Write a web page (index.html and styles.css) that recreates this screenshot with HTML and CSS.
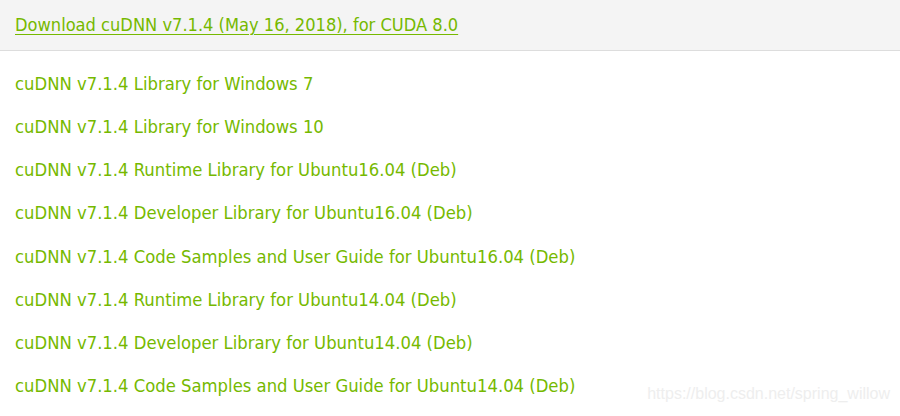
FILE: index.html
```html
<!DOCTYPE html>
<html lang="en">
<head>
<meta charset="utf-8">
<title>cuDNN Download</title>
<link rel="stylesheet" href="styles.css">
</head>
<body>
<div class="panel">
  <div class="panel-heading">
    <a class="heading-link" href="#">Download cuDNN v7.1.4 (May 16, 2018), for CUDA 8.0</a>
  </div>
  <ul class="file-list">
    <li><a href="#">cuDNN v7.1.4 Library for Windows 7</a></li>
    <li><a href="#">cuDNN v7.1.4 Library for Windows 10</a></li>
    <li><a href="#">cuDNN v7.1.4 Runtime Library for Ubuntu16.04 (Deb)</a></li>
    <li><a href="#">cuDNN v7.1.4 Developer Library for Ubuntu16.04 (Deb)</a></li>
    <li><a href="#">cuDNN v7.1.4 Code Samples and User Guide for Ubuntu16.04 (Deb)</a></li>
    <li><a href="#">cuDNN v7.1.4 Runtime Library for Ubuntu14.04 (Deb)</a></li>
    <li><a href="#">cuDNN v7.1.4 Developer Library for Ubuntu14.04 (Deb)</a></li>
    <li><a href="#">cuDNN v7.1.4 Code Samples and User Guide for Ubuntu14.04 (Deb)</a></li>
  </ul>
  <div class="watermark">https://blog.csdn.net/spring_willow</div>
</div>
</body>
</html>
```
FILE: styles.css
```css
html, body {
  margin: 0;
  padding: 0;
  background: #ffffff;
}
.panel {
  position: relative;
  width: 900px;
  height: 416px;
  overflow: hidden;
  font-family: "DejaVu Sans Condensed", "DejaVu Sans", sans-serif;
  font-size: 18.3px;
}
.panel-heading {
  height: 51px;
  box-sizing: border-box;
  background: #f4f4f4;
  border-bottom: 1px solid #dddddd;
  display: flex;
  align-items: center;
  padding: 0 15px 2px;
}
.heading-link {
  font-size: 18.1px;
  color: #76b900;
  text-decoration: underline;
  text-underline-offset: 3px;
  text-decoration-thickness: 1px;
}
.file-list {
  list-style: none;
  margin: 0;
  padding: 11px 15px 0;
}
.file-list li {
  height: 43.14px;
  display: flex;
  align-items: center;
}
.file-list a {
  color: #76b900;
  text-decoration: none;
}
.watermark {
  position: absolute;
  right: 10px;
  bottom: 13px;
  font-family: "Liberation Sans", Arial, sans-serif;
  font-size: 16px;
  color: #eeeeee;
}
```
